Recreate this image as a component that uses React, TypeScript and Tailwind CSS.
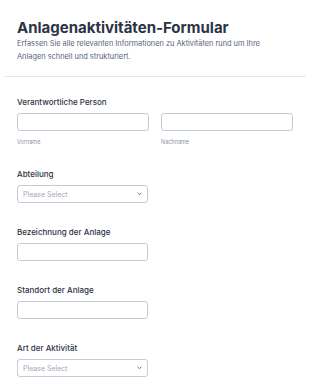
const font = { fontFamily: "Inter, 'Noto Sans', sans-serif" };

function Label({ children }: { children: React.ReactNode }) {
  return <div className="text-[8px] font-medium text-[#2c3345] leading-[10px] mb-[6px]">{children}</div>;
}

function TextBox() {
  return <div className="w-[131px] h-[18px] rounded-[3px] border border-[#c3cad8] bg-white" />;
}

function SelectBox() {
  return (
    <div className="w-[131px] h-[18px] rounded-[3px] border border-[#c3cad8] bg-white flex items-center justify-between pl-[5px] pr-[5px]">
      <span className="text-[7px] text-[#a0a8ba] leading-none">Please Select</span>
      <svg width="5" height="4" viewBox="0 0 5 4">
        <path d="M0.8 1l1.7 1.7 1.7-1.7" stroke="#57647e" strokeWidth="0.9" fill="none" strokeLinecap="round" strokeLinejoin="round" />
      </svg>
    </div>
  );
}

export default function App() {
  return (
    <div className="w-[310px] h-[381px] bg-white overflow-hidden" style={font}>
      <div className="mx-[4px] px-[13px] pt-[19px] pb-[13px] border-b border-[#e6e8ee]">
        <h1 className="text-[15px] font-bold text-[#2c3345] leading-[18px]">Anlagenaktivitäten-Formular</h1>
        <p className="w-[258px] text-[7.4px] text-[#57647e] leading-[13px]">
          Erfassen Sie alle relevanten Informationen zu Aktivitäten rund um Ihre Anlagen schnell und strukturiert.
        </p>
      </div>

      <div className="px-[17px] pt-[20px] flex flex-col gap-[24px]">
        <div>
          <Label>Verantwortliche Person</Label>
          <div className="flex gap-[12px]">
            <div className="flex flex-col gap-[8px]">
              <div className="w-[132px] h-[18px] rounded-[3px] border border-[#c3cad8]" />
              <span className="text-[5.5px] leading-[6px] text-[#8d95ab]">Vorname</span>
            </div>
            <div className="flex flex-col gap-[8px]">
              <div className="w-[132px] h-[18px] rounded-[3px] border border-[#c3cad8]" />
              <span className="text-[5.5px] leading-[6px] text-[#8d95ab]">Nachname</span>
            </div>
          </div>
        </div>
        <div>
          <Label>Abteilung</Label>
          <SelectBox />
        </div>
        <div>
          <Label>Bezeichnung der Anlage</Label>
          <TextBox />
        </div>
        <div>
          <Label>Standort der Anlage</Label>
          <TextBox />
        </div>
        <div>
          <Label>Art der Aktivität</Label>
          <SelectBox />
        </div>
      </div>
    </div>
  );
}
